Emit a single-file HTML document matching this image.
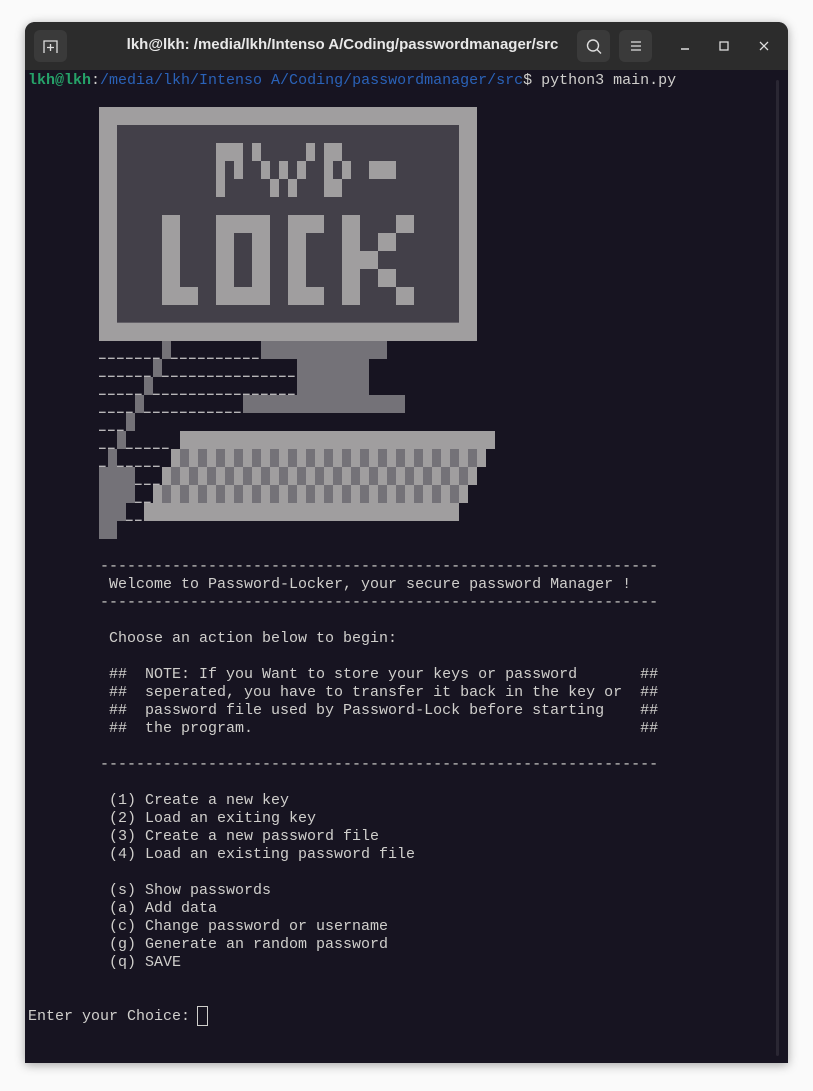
<!DOCTYPE html>
<html><head><meta charset="utf-8"><style>
body{margin:0;width:813px;height:1091px;background:#fafafa;position:relative;overflow:hidden;font-family:"Liberation Mono",monospace}
.win{position:absolute;left:25px;top:22px;width:763px;height:1041px;background:#171421;border-radius:10px 10px 0 0;box-shadow:0 2px 10px rgba(0,0,0,.35);overflow:hidden}
.tb{position:absolute;left:0;top:0;width:763px;height:48px;background:#2c2c2c}
.btn{position:absolute;top:8px;width:33px;height:32px;background:#3a3a3a;border-radius:6px}
.title{position:absolute;left:0;width:763px;top:14px;text-align:center;color:#e8e8e8;font:bold 15px "Liberation Sans",sans-serif;padding-left:0}
pre{position:absolute;left:28px;top:72px;margin:0;font-size:15px;line-height:18px;color:#d0cfcc;font-family:"Liberation Mono",monospace}
.g{color:#26a269;font-weight:bold}.b{color:#2a62b8}
svg{position:absolute}
</style></head><body>
<div class="win">
<div class="tb">
<div class="btn" style="left:9px"></div>
<svg style="left:17px;top:16px" width="18" height="16"><path d="M2 15V3h13v12M8.5 6v7M5 9.5h7" stroke="#ddd" stroke-width="1.3" fill="none"/></svg>
<div class="title" style="left:-64px">lkh@lkh: /media/lkh/Intenso A/Coding/passwordmanager/src</div>
<div class="btn" style="left:552px"></div>
<svg style="left:560px;top:16px" width="18" height="18"><circle cx="8" cy="7.5" r="5.5" stroke="#ddd" stroke-width="1.4" fill="none"/><path d="M12 11.5l4 4" stroke="#ddd" stroke-width="1.4"/></svg>
<div class="btn" style="left:594px"></div>
<svg style="left:604px;top:17px" width="14" height="14"><path d="M2 3h10M2 7h10M2 11h10" stroke="#ddd" stroke-width="1.3"/></svg>
<svg style="left:652px;top:17px" width="16" height="14"><path d="M4 10h8" stroke="#ddd" stroke-width="1.4"/></svg>
<svg style="left:691px;top:17px" width="16" height="14"><rect x="4" y="3" width="8" height="8" stroke="#ddd" stroke-width="1.3" fill="none"/></svg>
<svg style="left:731px;top:17px" width="16" height="14"><path d="M4 3l8 8M12 3l-8 8" stroke="#ddd" stroke-width="1.3"/></svg>
</div>
<div style="position:absolute;left:751px;top:58px;width:3px;height:976px;background:#2a2733;border-radius:2px"></div>
</div>
<svg style="left:90px;top:100px" width="420" height="250" viewBox="0 0 1260 750">
<rect x="27" y="21" width="1134" height="701" fill="#a09e9f"/>
<rect x="81" y="75" width="1026" height="593" fill="#434049"/>
<g fill="#a09e9f">
<rect x="378" y="129" width="81" height="54"/><rect x="378" y="183" width="27" height="108"/><rect x="432" y="183" width="27" height="54"/>
<rect x="486" y="129" width="27" height="54"/><rect x="513" y="183" width="27" height="54"/><rect x="540" y="237" width="27" height="54"/><rect x="567" y="183" width="27" height="54"/><rect x="594" y="237" width="27" height="54"/><rect x="621" y="183" width="27" height="54"/><rect x="648" y="129" width="27" height="54"/>
<rect x="702" y="129" width="54" height="54"/><rect x="702" y="183" width="27" height="108"/><rect x="756" y="183" width="27" height="54"/><rect x="729" y="237" width="27" height="54"/>
<rect x="837" y="183" width="81" height="54"/>
<rect x="216" y="345" width="54" height="270"/><rect x="270" y="561" width="54" height="54"/>
<rect x="378" y="345" width="162" height="270"/>
<rect x="594" y="345" width="54" height="270"/><rect x="648" y="345" width="54" height="54"/><rect x="648" y="561" width="54" height="54"/>
<rect x="756" y="345" width="54" height="270"/><rect x="810" y="453" width="54" height="54"/><rect x="864" y="399" width="54" height="54"/><rect x="918" y="345" width="54" height="54"/><rect x="864" y="507" width="54" height="54"/><rect x="918" y="561" width="54" height="54"/>
</g>
<rect x="432" y="399" width="54" height="162" fill="#434049"/>
<rect x="216" y="722" width="27" height="28" fill="#747278"/><rect x="513" y="722" width="378" height="28" fill="#747278"/>
</svg>
<svg style="left:90px;top:335px" width="420" height="210" viewBox="0 0 1260 630">
<defs>
<pattern id="p1" x="270" y="0" width="54" height="54" patternUnits="userSpaceOnUse"><rect width="54" height="54" fill="#a09e9f"/><rect width="27" height="54" fill="#747278"/></pattern>
<pattern id="p2" x="243" y="0" width="54" height="54" patternUnits="userSpaceOnUse"><rect width="54" height="54" fill="#a09e9f"/><rect width="27" height="54" fill="#747278"/></pattern>
<pattern id="p3" x="216" y="0" width="54" height="54" patternUnits="userSpaceOnUse"><rect width="54" height="54" fill="#a09e9f"/><rect width="27" height="54" fill="#747278"/></pattern>
</defs>
<rect x="27" y="0" width="1134" height="18" fill="#a09e9f"/>
<g fill="#747278">
<rect x="513" y="18" width="378" height="54"/><rect x="621" y="72" width="216" height="108"/><rect x="459" y="180" width="486" height="54"/>
<rect x="216" y="18" width="27" height="54"/><rect x="189" y="72" width="27" height="54"/><rect x="162" y="126" width="27" height="54"/><rect x="135" y="180" width="27" height="54"/><rect x="108" y="234" width="27" height="54"/><rect x="81" y="288" width="27" height="54"/><rect x="54" y="342" width="27" height="54"/>
<rect x="27" y="396" width="108" height="108"/><rect x="27" y="504" width="81" height="54"/><rect x="27" y="558" width="54" height="54"/>
</g>
<rect x="270" y="288" width="945" height="54" fill="#a09e9f"/>
<rect x="243" y="342" width="945" height="54" fill="url(#p1)"/>
<rect x="1161" y="342" width="27" height="54" fill="#a09e9f"/><rect x="243" y="342" width="27" height="54" fill="#a09e9f"/>
<rect x="216" y="396" width="945" height="54" fill="url(#p2)"/>
<rect x="1134" y="396" width="27" height="54" fill="#a09e9f"/><rect x="216" y="396" width="27" height="54" fill="#a09e9f"/>
<rect x="189" y="450" width="945" height="54" fill="url(#p3)"/>
<rect x="1107" y="450" width="27" height="54" fill="#a09e9f"/><rect x="189" y="450" width="27" height="54" fill="#a09e9f"/>
<rect x="162" y="504" width="945" height="54" fill="#a09e9f"/>
<g stroke="#b8b6b8" stroke-width="4" stroke-dasharray="20 7">
<path d="M27 70H216M243 70H513M27 124H189M216 124H621M27 178H162M189 178H621M27 232H135M162 232H459M27 286H108M27 340H81M108 340H243M27 394H54M81 394H216M135 448H216M135 502H189M108 556H162"/>
</g>
</svg>
<pre><span class="g">lkh@lkh</span>:<span class="b">/media/lkh/Intenso A/Coding/passwordmanager/src</span>$ python3 main.py


























        --------------------------------------------------------------
         Welcome to Password-Locker, your secure password Manager !
        --------------------------------------------------------------

         Choose an action below to begin:

         ##  NOTE: If you Want to store your keys or password       ##
         ##  seperated, you have to transfer it back in the key or  ##
         ##  password file used by Password-Lock before starting    ##
         ##  the program.                                           ##

        --------------------------------------------------------------

         (1) Create a new key
         (2) Load an exiting key
         (3) Create a new password file
         (4) Load an existing password file

         (s) Show passwords
         (a) Add data
         (c) Change password or username
         (g) Generate an random password
         (q) SAVE


Enter your Choice: </pre>
<div style="position:absolute;left:197px;top:1006px;width:9px;height:18px;border:1px solid #d0cfcc"></div>
</body></html>
